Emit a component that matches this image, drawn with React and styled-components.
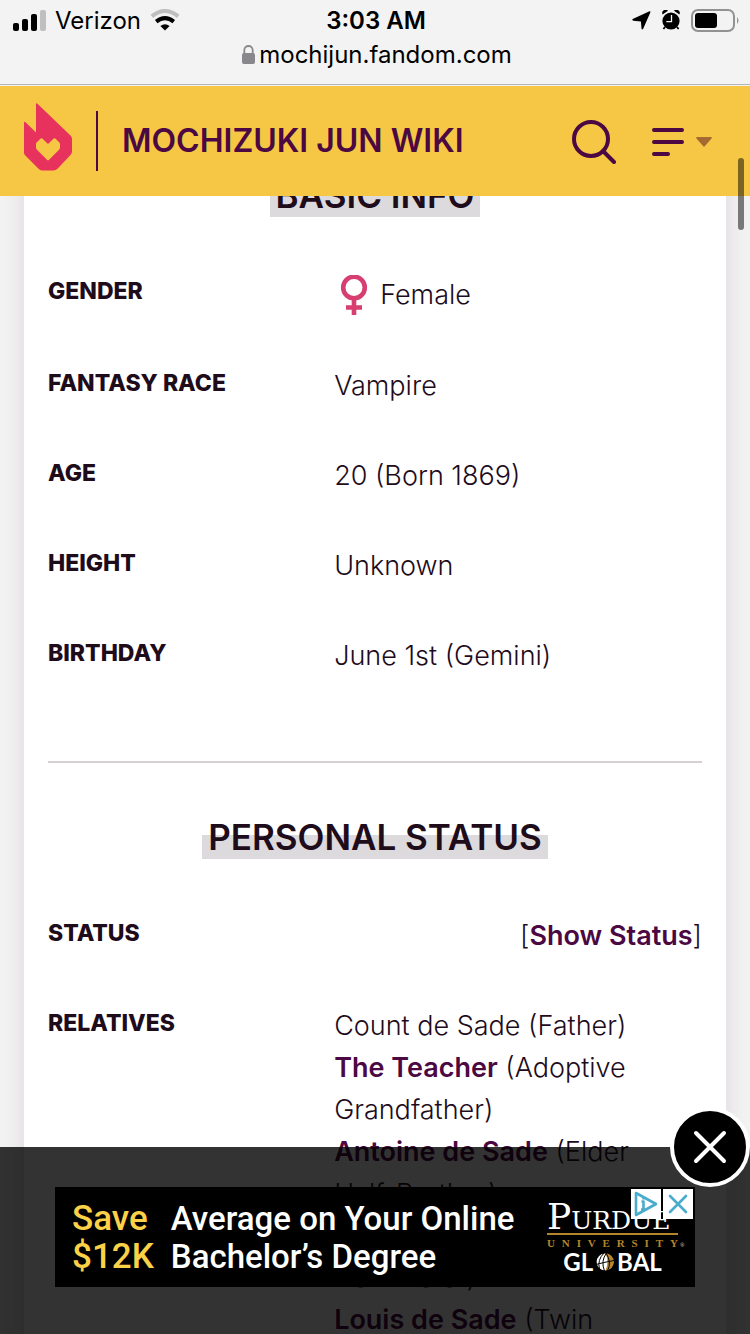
import React from 'react';
import styled, { createGlobalStyle } from 'styled-components';

const GlobalStyle = createGlobalStyle`
  *, *::before, *::after {
    box-sizing: border-box;
  }

  body {
    margin: 0;
    background: #f3f3f3;
    color: #1e0c1b;
    font-family: Inter, 'Liberation Sans', sans-serif;
    overflow: hidden;
  }
`;

const Page = styled.div`
  display: flex;
  flex-direction: column;
  height: 100vh;
`;

const BrowserBar = styled.div`
  background: #f3f3f3;
  border-bottom: 1px solid #b5b5b7;
  color: #000;
  height: 85px;
  margin-bottom: 1px;
  flex-shrink: 0;
`;

const StatusBar = styled.div`
  display: grid;
  grid-template-columns: 1fr auto 1fr;
  align-items: center;
  height: 40px;
  padding: 0 11px 0 13px;
  font-size: 24px;
`;

const StatusGroup = styled.div`
  display: flex;
  align-items: center;
  justify-content: ${props => (props.$end ? 'flex-end' : 'flex-start')};
  gap: ${props => (props.$end ? '11px' : '9px')};
`;

const Clock = styled.time`
  font-weight: 600;
`;

const AddressBar = styled.div`
  display: flex;
  align-items: center;
  justify-content: center;
  gap: 4px;
  height: 28px;
  padding-left: 4px;
  font-size: 24px;
`;

const WikiHeader = styled.header`
  display: flex;
  align-items: center;
  height: 110px;
  padding: 0 38px 0 24px;
  background: #f6c744;
  color: #4b0842;
  flex-shrink: 0;
  position: relative;
  z-index: 2;
`;

const LogoLink = styled.a`
  display: flex;
  align-items: flex-end;
  height: 60px;
  padding-right: 24px;
  border-right: 2px solid #4b0842;
`;

const WikiTitle = styled.a`
  flex: 1;
  padding-left: 24px;
  color: inherit;
  font-size: 32px;
  font-weight: 600;
  line-height: 40px;
  text-decoration: none;
  text-transform: uppercase;
`;

const IconButton = styled.button`
  display: flex;
  align-items: center;
  gap: 12px;
  margin-left: ${props => props.$gap || '0'};
  padding: 2px 0 0;
  border: 0;
  background: transparent;
  color: inherit;
  cursor: pointer;
`;

const Content = styled.main`
  flex: 1;
  min-height: 0;
  margin-top: -27px;
  padding: 0 24px;
  overflow: hidden;
`;

const Article = styled.article`
  min-height: 100%;
  padding: 0 24px;
  background: #fff;
  box-shadow: 0 0 24px rgba(75, 8, 66, 0.12);
`;

const Section = styled.section`
  text-align: center;

  & + & {
    margin-top: 60px;
    padding-top: 48px;
    border-top: 2px solid #d5d0d4;
  }
`;

const SectionTitle = styled.h2`
  display: inline-block;
  margin: 0 0 32px;
  padding: 4px 6px 0;
  background: linear-gradient(to top, #dddadd 50%, transparent 50%);
  font-size: 35px;
  font-weight: 600;
  line-height: 44px;
  text-transform: uppercase;
  vertical-align: top;
`;

const InfoList = styled.dl`
  margin: 0;
  text-align: left;
`;

const InfoRow = styled.div`
  display: grid;
  grid-template-columns: 7fr 9fr;
  padding: 24px 0;
`;

const Label = styled.dt`
  font-size: 23px;
  font-weight: 800;
  line-height: 36px;
  text-transform: uppercase;
`;

const Value = styled.dd`
  display: ${props => (props.$icon ? 'flex' : 'block')};
  align-items: center;
  gap: 12px;
  min-height: ${props => (props.$icon ? '44px' : '42px')};
  margin: 0;
  padding-left: ${props => (props.$icon ? '6px' : '0')};
  font-size: 27px;
  font-weight: 300;
  line-height: 42px;
  text-align: ${props => (props.$end ? 'right' : 'left')};
`;

const TextLink = styled.a`
  color: #4b0842;
  font-weight: 600;
  text-decoration: none;
`;

const AdOverlay = styled.aside`
  position: fixed;
  right: 0;
  bottom: 0;
  left: 0;
  z-index: 3;
  display: flex;
  justify-content: center;
  padding: 40px 0 47px;
  background: rgba(0, 0, 0, 0.8);
`;

const CloseButton = styled.button`
  position: absolute;
  top: -40px;
  right: 0;
  display: flex;
  align-items: center;
  justify-content: center;
  width: 80px;
  height: 80px;
  padding: 0;
  border: 4px solid #fff;
  border-radius: 50%;
  background: #000;
  cursor: pointer;
`;

const AdBanner = styled.div`
  position: relative;
  display: flex;
  align-items: center;
  width: 640px;
  height: 100px;
  padding: 0 17px;
  background: #000;
  color: #fff;
`;

const AdCopy = styled.p`
  margin: 0;
  color: ${props => (props.$accent ? '#fbd148' : '#fff')};
  font-family: Roboto, 'Liberation Sans', sans-serif;
  font-size: ${props => (props.$accent ? '35px' : '33px')};
  font-weight: 500;
  line-height: 38px;
  white-space: nowrap;
`;

const AdHeadline = styled.a`
  display: flex;
  flex: 1;
  gap: 17px;
  padding-top: 2px;
  color: inherit;
  text-decoration: none;
`;

const Sponsor = styled.div`
  display: flex;
  flex-direction: column;
  align-items: center;
  width: 131px;
`;

const SponsorName = styled.div`
  width: 100%;
  border-bottom: 2px solid #b5852b;
  font-family: 'DejaVu Serif', serif;
  font-size: 36px;
  font-variant: small-caps;
  line-height: 32px;
  white-space: nowrap;
`;

const SponsorKind = styled.div`
  position: relative;
  display: flex;
  justify-content: space-between;
  width: 100%;
  color: #b5852b;
  font-family: 'Liberation Serif', serif;
  font-size: 11px;
  font-weight: 700;
  line-height: 16px;
`;

const Registered = styled.span`
  position: absolute;
  top: 2px;
  left: 100%;
  padding-left: 2px;
  color: #bbb;
  font-size: 6px;
`;

const SponsorUnit = styled.div`
  display: flex;
  align-items: center;
  gap: 3px;
  font-family: Lato, 'Liberation Sans', sans-serif;
  font-size: 24px;
  font-weight: 700;
  line-height: 22px;
`;

const AdChoices = styled.div`
  position: absolute;
  top: 2px;
  right: 2px;
  display: flex;
  gap: 2px;
`;

const AdChoiceButton = styled.button`
  display: flex;
  align-items: center;
  justify-content: center;
  width: 30px;
  height: 30px;
  padding: 0;
  border: 0;
  background: #fff;
  cursor: pointer;
`;

const ScrollThumb = styled.div`
  position: fixed;
  top: 158px;
  right: 6px;
  z-index: 4;
  width: 6px;
  height: 72px;
  border-radius: 3px;
  background: rgba(0, 0, 0, 0.5);
`;

const SignalIcon = () => (
  <svg width="33" height="21" viewBox="0 0 33 21" aria-hidden="true">
    <rect x="0" y="13" width="6" height="8" rx="2" />
    <rect x="9" y="9" width="6" height="12" rx="2" />
    <rect x="18" y="4" width="6" height="17" rx="2" />
    <rect x="27" y="0" width="6" height="21" rx="2" fill="#bfbfbf" />
  </svg>
);

const WifiIcon = () => (
  <svg width="30" height="22" viewBox="0 0 30 22" aria-hidden="true">
    <path d="M1.8 7.4Q15-3.4 28.2 7.4" fill="none" stroke="#bfbfbf" strokeWidth="4" />
    <path d="M6.2 12.6Q15 5.6 23.8 12.6" fill="none" stroke="#000" strokeWidth="4" />
    <path d="M10.4 17Q15 13.4 19.6 17L15 21.6Z" />
  </svg>
);

const LocationIcon = () => (
  <svg width="19" height="19" viewBox="0 0 19 19" aria-hidden="true">
    <path d="M17 .4Q18.9-.2 18.3 1.6L11.2 17.7Q10.1 19.4 9.5 17.4L8.9 10.6 1.4 9.7Q-.8 8.8 1.2 7.7Z" />
  </svg>
);

const AlarmIcon = () => (
  <svg width="18" height="20" viewBox="0 0 18 20" aria-hidden="true">
    <circle cx="9" cy="11" r="8.6" />
    <path d="M.6 4.5A3.3 3.3 0 0 1 6 .8ZM17.4 4.5A3.3 3.3 0 0 0 12 .8Z" />
    <path d="M3 17 1.4 19M15 17l1.6 2" stroke="#000" strokeWidth="1.8" />
    <path d="M9.5 5v6.6H4.3" fill="none" stroke="#f3f3f3" strokeWidth="1.3" />
  </svg>
);

const BatteryIcon = () => (
  <svg width="48" height="23" viewBox="0 0 48 23" aria-hidden="true">
    <rect x="1" y="1" width="42" height="21" rx="6" fill="none" stroke="#929292" strokeWidth="2" />
    <rect x="4" y="4" width="22" height="15" rx="3" />
    <path d="M46 8q3 3.5 0 7Z" fill="#929292" />
  </svg>
);

const LockIcon = () => (
  <svg width="13" height="19" viewBox="0 0 13 19" aria-hidden="true">
    <rect x="0" y="8" width="13" height="11" rx="2" fill="#88878c" />
    <path d="M2.3 9V5.2a4.2 4.2 0 0 1 8.4 0V9" fill="none" stroke="#88878c" strokeWidth="1.8" />
  </svg>
);

const FandomLogo = () => (
  <svg width="48" height="68" viewBox="0 0 48 68" aria-hidden="true">
    <path
      fill="#e6325c"
      fillRule="evenodd"
      d="M12 1.3Q12-.8 13.7.9L46.7 32.8Q48 34.1 48 36V48.5Q48 50.4 46.7 51.7L33.5 65.8Q31.8 67.6 29.3 67.6H19Q16.5 67.6 14.8 66L1.3 52.6Q0 51.3 0 49.4V20.3Q0 17.8 1.8 19.5L12 29.5ZM24 41L18.3 35.5Q17.5 34.8 16.7 35.5L12.8 39.3Q12 40.1 12 41.2V44.4Q12 45.8 13 46.8L22.9 56.8Q24 57.8 25.1 56.8L35 46.8Q36 45.8 36 44.4V41.2Q36 40.1 35.2 39.3L31.3 35.5Q30.5 34.8 29.7 35.5Z"
    />
  </svg>
);

const SearchIcon = () => (
  <svg width="44" height="44" viewBox="0 0 44 44" fill="none" stroke="currentColor" strokeWidth="4" strokeLinecap="round" aria-hidden="true">
    <circle cx="19" cy="19" r="17" />
    <path d="M31 31l11 11" />
  </svg>
);

const MenuIcon = () => (
  <svg width="32" height="28" viewBox="0 0 32 28" stroke="currentColor" strokeWidth="4" strokeLinecap="round" aria-hidden="true">
    <path d="M2 2h28M2 14h28M2 26h14" />
  </svg>
);

const CaretIcon = () => (
  <svg width="16" height="10" viewBox="0 0 16 10" fill="#a46a31" aria-hidden="true">
    <path d="M1.5 0h13q2.4 0 .8 1.8L9 8.9q-1 1-2 0L.7 1.8Q-.9 0 1.5 0Z" />
  </svg>
);

const FemaleIcon = () => (
  <svg width="28" height="40" viewBox="0 0 28 40" fill="none" stroke="#d63f70" strokeWidth="4.6" aria-hidden="true">
    <circle cx="14" cy="12.5" r="10.8" />
    <path d="M14 23v17M6 32.5h16" />
  </svg>
);

const GlobeIcon = () => (
  <svg width="18" height="18" viewBox="0 0 18 18" aria-hidden="true">
    <circle cx="9" cy="9" r="8.4" fill="#fff" />
    <path d="M9.5.6a8.4 8.4 0 0 1 0 16.8Q13.5 9 9.5.6Z" fill="#b5852b" />
    <path d="M10.5 0Q4.5 8 8.5 18M10 0q6 9 1.5 18M8 0Q1 7 3.5 16M0 11.5Q9 9 18 7.5" fill="none" stroke="#000" strokeWidth="1" />
  </svg>
);

const basicInfo = [
  { label: 'Gender', value: 'Female', icon: true },
  { label: 'Fantasy Race', value: 'Vampire' },
  { label: 'Age', value: '20 (Born 1869)' },
  { label: 'Height', value: 'Unknown' },
  { label: 'Birthday', value: 'June 1st (Gemini)' },
];

const App = () => (
  <Page>
    <GlobalStyle />
    <BrowserBar>
      <StatusBar>
        <StatusGroup>
          <SignalIcon />
          <span>Verizon</span>
          <WifiIcon />
        </StatusGroup>
        <Clock>3:03 AM</Clock>
        <StatusGroup $end>
          <LocationIcon />
          <AlarmIcon />
          <BatteryIcon />
        </StatusGroup>
      </StatusBar>
      <AddressBar>
        <LockIcon />
        <span>mochijun.fandom.com</span>
      </AddressBar>
    </BrowserBar>

    <WikiHeader>
      <LogoLink href="#fandom" aria-label="Fandom">
        <FandomLogo />
      </LogoLink>
      <WikiTitle href="#home">Mochizuki Jun Wiki</WikiTitle>
      <IconButton type="button" aria-label="Search">
        <SearchIcon />
      </IconButton>
      <IconButton type="button" aria-label="Menu" $gap="36px">
        <MenuIcon />
        <CaretIcon />
      </IconButton>
    </WikiHeader>

    <Content>
      <Article>
        <Section>
          <SectionTitle>Basic Info</SectionTitle>
          <InfoList>
            {basicInfo.map(({ label, value, icon }) => (
              <InfoRow key={label}>
                <Label>{label}</Label>
                <Value $icon={icon}>
                  {icon && <FemaleIcon />}
                  {value}
                </Value>
              </InfoRow>
            ))}
          </InfoList>
        </Section>

        <Section>
          <SectionTitle>Personal Status</SectionTitle>
          <InfoList>
            <InfoRow>
              <Label>Status</Label>
              <Value $end>
                [<TextLink href="#status">Show Status</TextLink>]
              </Value>
            </InfoRow>
            <InfoRow>
              <Label>Relatives</Label>
              <Value>
                Count de Sade (Father)
                <br />
                <TextLink href="#teacher">The Teacher</TextLink> (Adoptive
                <br />
                Grandfather)
                <br />
                <TextLink href="#antoine">Antoine de Sade</TextLink> (Elder
                <br />
                Half-Brother)
                <br />
                <TextLink href="#veronica">Veronica de Sade</TextLink> (Elder
                <br />
                Half-Sister)
                <br />
                <TextLink href="#louis">Louis de Sade</TextLink> (Twin
              </Value>
            </InfoRow>
          </InfoList>
        </Section>
      </Article>
    </Content>

    <AdOverlay aria-label="Advertisement">
      <AdBanner>
        <AdHeadline href="#offer">
          <AdCopy $accent>
            Save
            <br />
            $12K
          </AdCopy>
          <AdCopy>
            Average on Your Online
            <br />
            Bachelor’s Degree
          </AdCopy>
        </AdHeadline>
        <Sponsor>
          <SponsorName>Purdue</SponsorName>
          <SponsorKind>
            {'UNIVERSITY'.split('').map((letter, index) => (
              <span key={index}>{letter}</span>
            ))}
            <Registered>®</Registered>
          </SponsorKind>
          <SponsorUnit>
            GL
            <GlobeIcon />
            BAL
          </SponsorUnit>
        </Sponsor>
        <AdChoices>
          <AdChoiceButton type="button" aria-label="Ad choices">
            <svg width="24" height="26" viewBox="0 0 24 26" fill="none" stroke="#4aaccc" strokeWidth="2.6" strokeLinejoin="round">
              <path d="M2 2v22L22 13ZM7.5 10.5H9.5v8M7 18.5h5M9.5 6v2.5" />
            </svg>
          </AdChoiceButton>
          <AdChoiceButton type="button" aria-label="Hide ad">
            <svg width="20" height="20" viewBox="0 0 20 20" stroke="#4aaccc" strokeWidth="2.6" strokeLinecap="round">
              <path d="M2 2l16 16M18 2L2 18" />
            </svg>
          </AdChoiceButton>
        </AdChoices>
      </AdBanner>
      <CloseButton type="button" aria-label="Close">
        <svg width="34" height="34" viewBox="0 0 34 34" stroke="#fff" strokeWidth="4" strokeLinecap="round">
          <path d="M3 3l28 28M31 3L3 31" />
        </svg>
      </CloseButton>
    </AdOverlay>
    <ScrollThumb />
  </Page>
);

export default App;
